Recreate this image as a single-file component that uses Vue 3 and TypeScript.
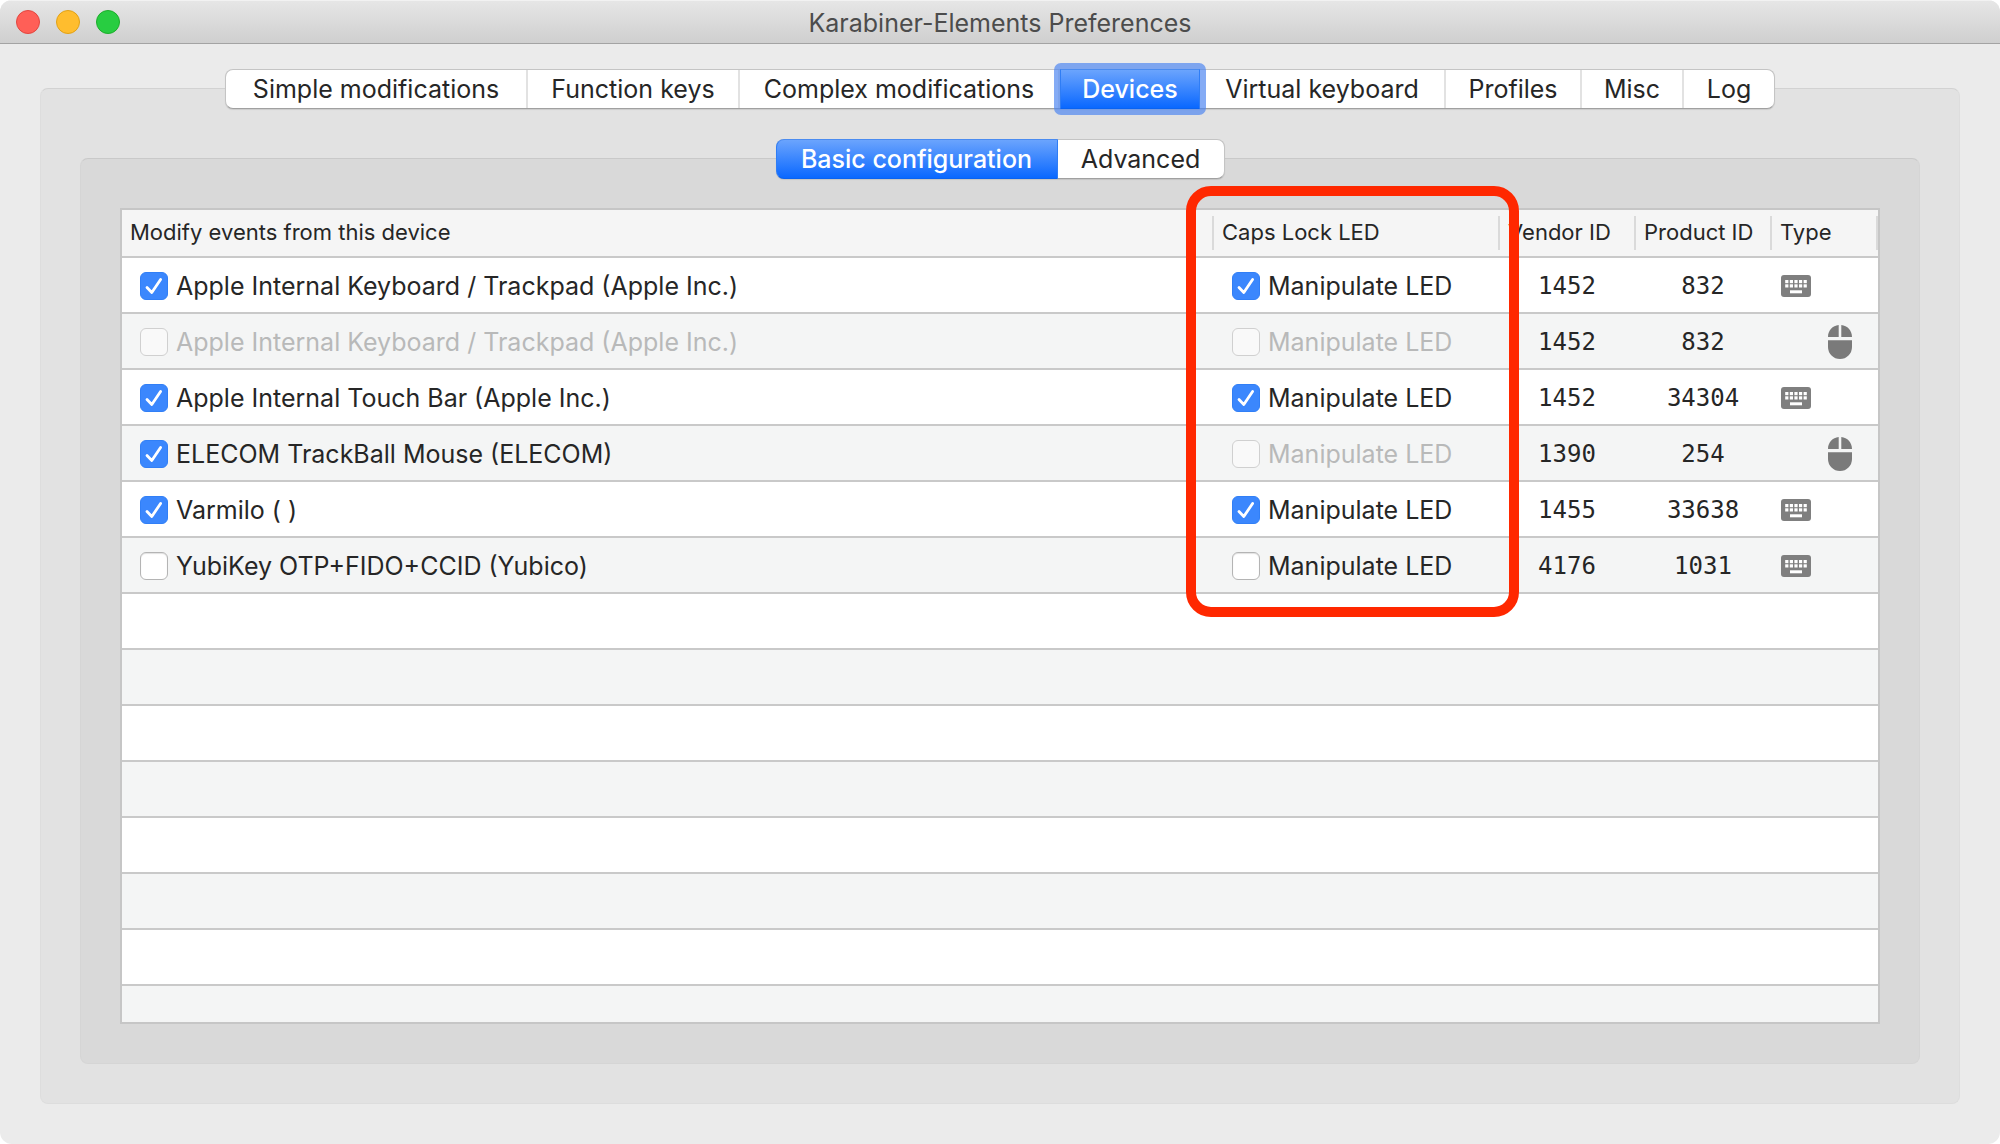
<script setup lang="ts">
import { ref } from 'vue'

interface Segment {
  label: string
  width: number
}

interface Device {
  name: string
  modify: boolean
  modifyDisabled?: boolean
  led: boolean
  ledDisabled?: boolean
  vendorId: number
  productId: number
  type: 'keyboard' | 'mouse'
}

const tabs: Segment[] = [
  { label: 'Simple modifications', width: 302 },
  { label: 'Function keys', width: 212 },
  { label: 'Complex modifications', width: 320 },
  { label: 'Devices', width: 140 },
  { label: 'Virtual keyboard', width: 246 },
  { label: 'Profiles', width: 136 },
  { label: 'Misc', width: 102 },
  { label: 'Log', width: 90 },
]
const subTabs: Segment[] = [
  { label: 'Basic configuration', width: 282 },
  { label: 'Advanced', width: 166 },
]

const activeTab = ref('Devices')
const activeSubTab = ref('Basic configuration')

const devices = ref<Device[]>([
  { name: 'Apple Internal Keyboard / Trackpad (Apple Inc.)', modify: true, led: true, vendorId: 1452, productId: 832, type: 'keyboard' },
  { name: 'Apple Internal Keyboard / Trackpad (Apple Inc.)', modify: false, modifyDisabled: true, led: false, ledDisabled: true, vendorId: 1452, productId: 832, type: 'mouse' },
  { name: 'Apple Internal Touch Bar (Apple Inc.)', modify: true, led: true, vendorId: 1452, productId: 34304, type: 'keyboard' },
  { name: 'ELECOM TrackBall Mouse (ELECOM)', modify: true, led: false, ledDisabled: true, vendorId: 1390, productId: 254, type: 'mouse' },
  { name: 'Varmilo ( )', modify: true, led: true, vendorId: 1455, productId: 33638, type: 'keyboard' },
  { name: 'YubiKey OTP+FIDO+CCID (Yubico)', modify: false, led: false, vendorId: 4176, productId: 1031, type: 'keyboard' },
])

const keyColumns = [0, 1, 2, 3, 4]
</script>

<template>
  <div class="window">
    <header class="titlebar">
      <div class="lights">
        <button class="light close" type="button" aria-label="Close"></button>
        <button class="light minimize" type="button" aria-label="Minimize"></button>
        <button class="light zoom" type="button" aria-label="Zoom"></button>
      </div>
      <h1 class="title">Karabiner-Elements Preferences</h1>
    </header>

    <main class="content">
      <nav class="segments" role="tablist" aria-label="Preferences">
        <button
          v-for="tab in tabs"
          :key="tab.label"
          type="button"
          role="tab"
          class="segment"
          :class="{ active: tab.label === activeTab, ringed: tab.label === activeTab }"
          :style="{ width: tab.width + 'px' }"
          :aria-selected="tab.label === activeTab"
          @click="activeTab = tab.label"
        >{{ tab.label }}</button>
      </nav>

      <section class="panel outer">
        <nav class="segments" role="tablist" aria-label="Devices">
          <button
            v-for="tab in subTabs"
            :key="tab.label"
            type="button"
            role="tab"
            class="segment"
            :class="{ active: tab.label === activeSubTab }"
            :style="{ width: tab.width + 'px' }"
            :aria-selected="tab.label === activeSubTab"
            @click="activeSubTab = tab.label"
          >{{ tab.label }}</button>
        </nav>

        <section class="panel inner">
          <div class="list">
            <table class="devices">
              <colgroup>
                <col />
                <col class="col-led" />
                <col class="col-id" />
                <col class="col-id" />
                <col class="col-type" />
              </colgroup>
              <thead>
                <tr>
                  <th scope="col">Modify events from this device</th>
                  <th scope="col">Caps Lock LED</th>
                  <th scope="col">Vendor ID</th>
                  <th scope="col">Product ID</th>
                  <th scope="col">Type</th>
                </tr>
              </thead>
              <tbody>
                <tr v-for="(device, i) in devices" :key="i">
                  <td>
                    <label class="check" :class="{ disabled: device.modifyDisabled }">
                      <input v-model="device.modify" type="checkbox" :disabled="device.modifyDisabled" />
                      <span>{{ device.name }}</span>
                    </label>
                  </td>
                  <td>
                    <label class="check" :class="{ disabled: device.ledDisabled }">
                      <input v-model="device.led" type="checkbox" :disabled="device.ledDisabled" />
                      <span>Manipulate LED</span>
                    </label>
                  </td>
                  <td class="number">{{ device.vendorId }}</td>
                  <td class="number">{{ device.productId }}</td>
                  <td>
                    <div class="types">
                      <svg v-if="device.type === 'keyboard'" class="keyboard" viewBox="0 0 30 22" role="img" aria-label="Keyboard">
                        <rect width="30" height="22" rx="3" fill="#7f7f7f" />
                        <g fill="#fff">
                          <rect v-for="c in keyColumns" :key="'a' + c" :x="4.2 + c * 4.6" y="5" width="3.2" height="3.2" />
                          <rect v-for="c in keyColumns" :key="'b' + c" :x="4.2 + c * 4.6" y="9.3" width="3.2" height="3.2" />
                          <rect x="9" y="15.3" width="12" height="3" />
                        </g>
                      </svg>
                      <svg v-else class="mouse" viewBox="0 0 24 34" role="img" aria-label="Mouse">
                        <path d="M10.7 0.1V12H0C0 5.5 4.6 0.8 10.7 0.1zM13.3 0.1V12H24C24 5.5 19.4 0.8 13.3 0.1zM0 15.2H24V22A12 12 0 0 1 0 22z" fill="#7a7a7a" />
                      </svg>
                    </div>
                  </td>
                </tr>
              </tbody>
            </table>
            <div class="empty-rows"></div>
            <div class="callout"></div>
          </div>
        </section>
      </section>
    </main>
  </div>
</template>

<style>
body {
  margin: 0;
  background: #fff;
}
</style>

<style scoped>
* {
  box-sizing: border-box;
}

.window {
  display: flex;
  flex-direction: column;
  min-height: 100vh;
  border-radius: 12px;
  overflow: hidden;
  background: #ebebeb;
  color: #262626;
  font-family: Inter, "Liberation Sans", sans-serif;
  font-size: 25px;
}

.titlebar {
  display: grid;
  grid-template-columns: 1fr auto 1fr;
  align-items: center;
  height: 44px;
  padding: 0 16px;
  border-top: 1px solid #f2f2f2;
  border-bottom: 1px solid #a3a3a3;
  background: linear-gradient(#e6e6e6, #cfcfcf);
}

.lights {
  display: flex;
  gap: 16px;
}

.light {
  width: 24px;
  height: 24px;
  padding: 0;
  border: 1px solid;
  border-radius: 50%;
}

.close {
  border-color: #e2463f;
  background: #ff5f57;
}

.minimize {
  border-color: #e1a116;
  background: #ffbd2e;
}

.zoom {
  border-color: #1dad2b;
  background: #28cd41;
}

.title {
  margin: 0;
  padding-top: 2px;
  color: #4c4c4c;
  font-size: 25px;
  font-weight: 400;
  line-height: 32px;
}

.content {
  display: flex;
  flex: 1;
  flex-direction: column;
  padding: 25px 40px 40px;
}

.segments {
  position: relative;
  z-index: 1;
  display: flex;
  align-self: center;
  height: 40px;
  margin-bottom: -21px;
  border: 1px solid #c4c4c4;
  border-bottom-color: #a0a0a0;
  border-radius: 8px;
  background: #fff;
  box-shadow: 0 1px 1px rgba(0, 0, 0, 0.1);
}

.segment {
  position: relative;
  padding: 0;
  border: 0;
  border-right: 2px solid #e2e2e2;
  background: transparent;
  color: #262626;
  font: inherit;
  line-height: 38px;
  text-align: center;
  white-space: nowrap;
}

.segment:last-child {
  border-right: 0;
}

.segment.active {
  margin: -1px 0;
  border: 1px solid #2f7df5;
  border-top-color: #4a8bf0;
  border-bottom-color: #0a63f0;
  background: linear-gradient(#6ba4fd, #0a68ff);
  color: #fff;
  font-weight: 500;
}

.segment.active:first-child {
  margin-left: -1px;
  border-radius: 8px 0 0 8px;
}

.segment.ringed::after {
  position: absolute;
  inset: -7px;
  border: 6px solid rgba(74, 131, 240, 0.68);
  border-radius: 7px;
  content: "";
}

.panel {
  display: flex;
  flex: 1;
  flex-direction: column;
  border: 1px solid;
  border-radius: 8px;
}

.outer {
  padding: 50px 39px 39px;
  border-color: #d2d2d2 #dddddd #dddddd;
  background: #e2e2e2;
}

.inner {
  padding: 49px 39px 39px;
  border-color: #c9c9c9 #d5d5d5 #d5d5d5;
  background: #d9d9d9;
}

.list {
  position: relative;
  display: flex;
  flex: 1;
  flex-direction: column;
  border: 2px solid #c6c6c6;
  background: #fff;
}

.devices {
  width: 100%;
  table-layout: fixed;
  border-collapse: separate;
  border-spacing: 0;
}

.col-led {
  width: 286px;
}

.col-id {
  width: 136px;
}

.col-type {
  width: 106px;
}

th {
  height: 48px;
  padding: 0 8px 2px;
  border-bottom: 2px solid #c9c9c9;
  background: #f5f5f5 linear-gradient(#dadada, #dadada) no-repeat right center / 2px 34px;
  font-size: 22px;
  font-weight: 400;
  line-height: 32px;
  text-align: left;
  white-space: nowrap;
}

td {
  height: 56px;
  padding: 2px 0 0;
  border-bottom: 2px solid #c9c9c9;
}

tbody tr:nth-child(even) {
  background: #f4f5f5;
}

.check {
  display: flex;
  align-items: center;
  gap: 8px;
  padding-left: 18px;
  line-height: 32px;
  white-space: nowrap;
}

.check.disabled {
  color: #b8b9b9;
}

.check input {
  flex: none;
  width: 28px;
  height: 28px;
  margin: 0;
  appearance: none;
  border: 1px solid #b4b4b4;
  border-radius: 6px;
  background: #fff;
  box-shadow: inset 0 1px 1px rgba(0, 0, 0, 0.12);
}

.check input:checked {
  border-color: #317ff6;
  background: #3b87fd url("data:image/svg+xml,%3Csvg xmlns='http://www.w3.org/2000/svg' viewBox='0 0 28 28'%3E%3Cpath d='M7 15.5L11.8 20.5L20.6 7.5' fill='none' stroke='white' stroke-width='2.8' stroke-linecap='round' stroke-linejoin='round'/%3E%3C/svg%3E") center / 28px 28px;
  box-shadow: none;
}

.check input:disabled {
  border-color: #d0d0d0;
  background: #f9f9f9;
  box-shadow: none;
}

.number {
  padding-right: 2px;
  font-family: "DejaVu Sans Mono", "Liberation Mono", monospace;
  font-size: 24px;
  line-height: 32px;
  text-align: center;
}

.types {
  display: grid;
  grid-template-columns: 30px 24px;
  align-items: center;
  gap: 17px;
  padding-left: 9px;
}

.types svg {
  display: block;
}

.keyboard {
  grid-column: 1;
  width: 30px;
  height: 22px;
}

.mouse {
  grid-column: 2;
  width: 24px;
  height: 34px;
}

.empty-rows {
  flex: 1;
  background: repeating-linear-gradient(
    #fff 0 54px,
    #c9c9c9 54px 56px,
    #f4f5f5 56px 110px,
    #c9c9c9 110px 112px
  );
}

.callout {
  position: absolute;
  top: -24px;
  right: 359px;
  width: 333px;
  height: 431px;
  border: 10px solid #ff2800;
  border-radius: 25px;
  pointer-events: none;
}
</style>
